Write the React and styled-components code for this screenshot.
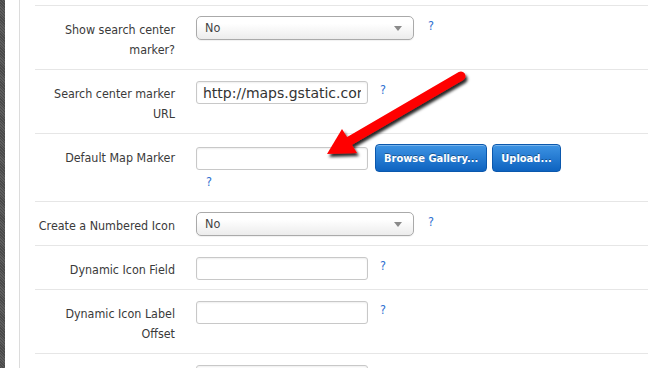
import React from "react";
import styled, { createGlobalStyle } from "styled-components";

const GlobalStyle = createGlobalStyle`
  html, body { margin: 0; padding: 0; background: #fff; overflow: hidden; }
  * { box-sizing: border-box; }
`;

const Page = styled.div`
  position: relative;
  display: flex;
  width: 648px;
  height: 368px;
  overflow: hidden;
  font-family: "DejaVu Sans Condensed", "DejaVu Sans", sans-serif;
`;

const Strip = styled.div`
  width: 5px;
  flex: none;
  background: repeating-linear-gradient(45deg, #4a4a4a 0 1px, #5e5e5e 1px 2px);
`;

const Gutter = styled.div`
  width: 15px;
  flex: none;
  border-right: 1px solid #dcdcdc;
`;

const Content = styled.div`
  flex: 1;
  padding-left: 15px;
`;

const TopStub = styled.div`
  height: 5px;
`;

const Row = styled.div`
  display: grid;
  grid-template-columns: 140px auto;
  column-gap: 21px;
  border-top: 1px solid #e6e6e6;
  padding: 10px 0 9px;
`;

const Label = styled.div`
  text-align: right;
  padding-top: 4px;
  font-size: 12.4px;
  line-height: 20px;
  color: #3a3a3a;
`;

const Controls = styled.div`
  display: flex;
  align-items: flex-start;
`;

const Stack = styled.div`
  display: flex;
  flex-direction: column;
`;

const Line = styled.div`
  display: flex;
  align-items: center;
`;

const Help = styled.span`
  margin-left: ${(p) => p.$gap}px;
  padding-left: ${(p) => p.$indent || 0}px;
  font-size: 12.5px;
  line-height: 20px;
  color: #2d6fd0;
`;

const Select = styled.div`
  position: relative;
  width: 218px;
  height: 24px;
  border: 1px solid #aaa;
  border-radius: 5px;
  background: linear-gradient(#ffffff 30%, #ececec 100%);
  box-shadow: 0 1px 1px rgba(0, 0, 0, 0.06);
  padding-left: 8px;
  font-size: 12.5px;
  line-height: 22px;
  color: #444;
`;

const Caret = styled.span`
  position: absolute;
  right: 11px;
  top: 9px;
  width: 0;
  height: 0;
  border-left: 4px solid transparent;
  border-right: 4px solid transparent;
  border-top: 5px solid #8a8a8a;
`;

const TextInput = styled.input`
  width: 172px;
  height: 23px;
  margin-top: ${(p) => p.$top || 0}px;
  border: 1px solid #c8c8c8;
  border-radius: 3px;
  box-shadow: inset 0 1px 2px rgba(0, 0, 0, 0.07);
  padding: 0 6px;
  font-family: "DejaVu Sans", sans-serif;
  font-size: 14px;
  color: #333;
  background: #fff;
  outline: none;
`;

const Button = styled.button`
  height: 28px;
  margin-left: ${(p) => p.$gap}px;
  padding: 0 ${(p) => p.$pad}px;
  border: 1px solid #0b58ad;
  border-radius: 4px;
  background: linear-gradient(#3d93e3, #0e63c0);
  box-shadow: inset 0 1px 0 rgba(255, 255, 255, 0.3);
  color: #fff;
  font-family: "DejaVu Sans Condensed", "DejaVu Sans", sans-serif;
  font-weight: bold;
  font-size: 11px;
  text-shadow: 0 -1px 0 rgba(0, 0, 0, 0.35);
  cursor: pointer;
`;

const Overlay = styled.svg`
  position: absolute;
  left: 0;
  top: 0;
  pointer-events: none;
`;

function SelectBox({ value }) {
  return (
    <Select role="combobox">
      {value}
      <Caret />
    </Select>
  );
}

export default function App() {
  return (
    <>
      <GlobalStyle />
      <Page>
        <Strip />
        <Gutter />
        <Content>
          <TopStub />
          <Row>
            <Label>Show search center marker?</Label>
            <Controls>
              <SelectBox value="No" />
              <Help $gap={14}>?</Help>
            </Controls>
          </Row>
          <Row>
            <Label>Search center marker URL</Label>
            <Controls>
              <TextInput $top={1} defaultValue="http://maps.gstatic.com/mapfiles/ridefinder-images/mm_20_red.png" />
              <Help $gap={12}>?</Help>
            </Controls>
          </Row>
          <Row>
            <Label>Default Map Marker</Label>
            <Stack>
              <Line>
                <TextInput />
                <Button $gap={7} $pad={8}>Browse Gallery...</Button>
                <Button $gap={5} $pad={8}>Upload...</Button>
              </Line>
              <Help $gap={0} $indent={10}>?</Help>
            </Stack>
          </Row>
          <Row>
            <Label>Create a Numbered Icon</Label>
            <Controls>
              <SelectBox value="No" />
              <Help $gap={14}>?</Help>
            </Controls>
          </Row>
          <Row>
            <Label>Dynamic Icon Field</Label>
            <Controls>
              <TextInput $top={1} />
              <Help $gap={12}>?</Help>
            </Controls>
          </Row>
          <Row>
            <Label>Dynamic Icon Label Offset</Label>
            <Controls>
              <TextInput $top={1} />
              <Help $gap={12}>?</Help>
            </Controls>
          </Row>
          <Row>
            <Label />
            <Controls>
              <TextInput $top={1} />
            </Controls>
          </Row>
        </Content>
        <Overlay width="648" height="368" viewBox="0 0 648 368">
          <defs>
            <filter id="shadow" x="-20%" y="-20%" width="140%" height="140%">
              <feDropShadow dx="2" dy="3" stdDeviation="1.6" floodColor="#000" floodOpacity="0.85" />
            </filter>
          </defs>
          <g filter="url(#shadow)">
            <line x1="461" y1="76" x2="346" y2="143" stroke="#ff0000" strokeWidth="9" strokeLinecap="round" />
            <polygon points="327,154 342,129 357,153" fill="#ff0000" />
          </g>
        </Overlay>
      </Page>
    </>
  );
}
